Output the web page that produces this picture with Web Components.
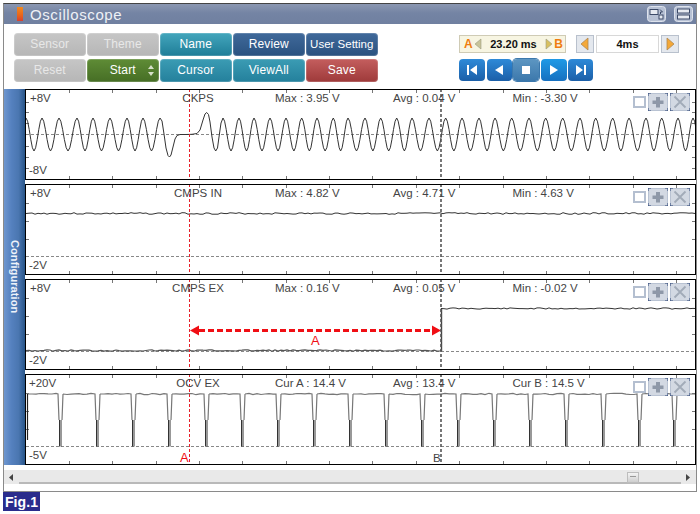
<!DOCTYPE html>
<html><head><meta charset="utf-8"><title>Oscilloscope</title>
<style>
html,body{margin:0;padding:0;background:#fff;font-family:"Liberation Sans",Arial,sans-serif}
body{padding:3px 0 0 3px;width:697px;height:511px;box-sizing:border-box;overflow:hidden}
</style></head><body>
<osc-window>
  <osc-title slot="title">Oscilloscope</osc-title>
  <osc-toolbar slot="toolbar"></osc-toolbar>
  <osc-sidebar slot="side">Configuration</osc-sidebar>
  <osc-panel slot="panels" kind="ckps" ytop="89" top-label="+8V" bottom-label="-8V" name="CKPS" s1="Max : 3.95 V" s2="Avg : 0.04 V" s3="Min : -3.30 V"></osc-panel>
  <osc-panel slot="panels" kind="in" ytop="184" top-label="+8V" bottom-label="-2V" name="CMPS IN" s1="Max : 4.82 V" s2="Avg : 4.71 V" s3="Min : 4.63 V"></osc-panel>
  <osc-panel slot="panels" kind="ex" ytop="279" top-label="+8V" bottom-label="-2V" name="CMPS EX" s1="Max : 0.16 V" s2="Avg : 0.05 V" s3="Min : -0.02 V"></osc-panel>
  <osc-panel slot="panels" kind="ocv" ytop="374" top-label="+20V" bottom-label="-5V" name="OCV EX" s1="Cur A : 14.4 V" s2="Avg : 13.4 V" s3="Cur B : 14.5 V"></osc-panel>
  <osc-scroll slot="scroll"></osc-scroll>
</osc-window>
<fig-badge>Fig.1</fig-badge>
<script>
function def(name, css, html, init){
  customElements.define(name, class extends HTMLElement{
    connectedCallback(){
      if(this.shadowRoot) return;
      const r=this.attachShadow({mode:'open'});
      r.innerHTML='<style>'+css+'</style>'+(typeof html==='function'?html(this):html);
      if(init) init(this,r);
    }
  });
}
def('osc-window',
 ':host{display:block;width:694px;height:489px;box-sizing:border-box;border:1px solid #8a8a8a;border-top-color:#444;background:#fff}'+
 '.main{display:flex;height:376px}.panels{display:flex;flex-direction:column;gap:4px;width:671px}',
 '<slot name="title"></slot><slot name="toolbar"></slot><div class="main"><slot name="side"></slot><div class="panels"><slot name="panels"></slot></div></div><slot name="scroll"></slot>');

def('osc-title',
 ':host{display:flex;align-items:center;height:20px;box-sizing:border-box;background:linear-gradient(#8b97b1,#7484a4 45%,#7080a0);color:#eef1f6;font-size:15px;padding-left:13px}'+
 '.ic{width:6px;height:14px;background:linear-gradient(#f08a20,#e8641c 60%,#d84030);margin-right:7px}'+
 '.t{flex:1;letter-spacing:.6px}.b{display:flex;gap:8px;margin-right:3px}'+
 '.b svg{display:block;width:19px;height:16px}',
 '<div class="ic"></div><div class="t"><slot></slot></div><div class="b">'+
 '<svg viewBox="0 0 19 16"><rect x=".5" y=".5" width="18" height="15" rx="3" fill="#b7c1d4" stroke="#dde2ec"/><rect x="3" y="3.5" width="8" height="5" fill="#e6eaf1" stroke="#3c4a68"/><rect x="12" y="9" width="4" height="4" fill="#e6eaf1" stroke="#3c4a68"/><path d="M13 3.5l2.5 2.5h-2v2" fill="none" stroke="#3c4a68"/></svg>'+
 '<svg viewBox="0 0 19 16"><rect x=".5" y=".5" width="18" height="15" rx="3" fill="#b7c1d4" stroke="#dde2ec"/><rect x="3.5" y="3" width="12" height="4" fill="#e6eaf1" stroke="#3c4a68"/><rect x="3.5" y="9" width="12" height="4" fill="#e6eaf1" stroke="#3c4a68"/></svg>'+
 '</div>');

def('osc-btn',
 ':host{display:flex;align-items:center;justify-content:center;position:relative;box-sizing:border-box;height:22.5px;width:71.5px;border-radius:4px;font-size:12px;letter-spacing:.15px;color:#fff;white-space:nowrap;'+
 'background:linear-gradient(var(--a),var(--b));box-shadow:inset 0 0 0 1px rgba(255,255,255,.18)}'+
 ':host([tight]){font-size:11.5px;letter-spacing:0}'+
 '.s{position:absolute;right:4px;top:6px;display:block}',
 h=>'<slot></slot>'+(h.hasAttribute('spin')?'<svg class="s" width="8" height="11" viewBox="0 0 8 11"><path d="M4 0l3 4H1zM4 11L1 7h6z" fill="#d6e0c8"/></svg>':''));

const tri=(d,f)=>'<svg width="10" height="14" viewBox="0 0 10 14" style="display:block"><path d="'+d+'" fill="'+f+'" stroke="#9a9a80" stroke-width=".6"/></svg>';
const arrow=(d)=>'<svg width="12" height="16" viewBox="0 0 12 16" style="display:block"><path d="'+d+'" fill="#f4a838" stroke="#b08850" stroke-width=".8"/></svg>';
const nav=(d)=>'<svg width="14" height="12" viewBox="0 0 14 12" style="display:block"><path d="'+d+'" fill="#fff"/></svg>';

def('osc-nav',
 ':host{display:flex;align-items:center;justify-content:center;height:22px;box-sizing:border-box;border-radius:4px;background:linear-gradient(#2e8ad8,#1b5fa8)}'+
 ':host([stop]){background:linear-gradient(#5d96c2,#3c78ac);box-shadow:0 0 0 1px #3c78ac}:host([bright]){background:linear-gradient(#1f9ae6,#1670c0)}',
 '<slot></slot>');

def('osc-toolbar',
 ':host{display:flex;height:65px;box-sizing:border-box;padding:9px 0 0 10px}'+
 '.g{display:grid;grid-template-columns:repeat(5,71.5px);grid-auto-rows:22.5px;gap:3.5px 1.5px;width:365px;height:49px}'+
 '.r{margin-left:80px;display:flex;flex-direction:column;padding-top:2px}'+
 '.top{display:flex;height:18px}'+
 '.ab{width:107px;box-sizing:border-box;border:1px solid #cfcbb5;background:#f7f5e2;display:flex;align-items:center;padding:0 2px 0 4px;font:bold 11px "Liberation Sans",Arial,sans-serif;color:#111}'+
 '.ab b{color:#ef7d10;font-size:12px}.ab span{flex:1;text-align:center}'+
 '.ar{width:18px;height:18px;box-sizing:border-box;border:1px solid #b9c1cd;background:#e4e8ee;display:flex;align-items:center;justify-content:center}'+
 '.f{width:63px;height:18px;box-sizing:border-box;border:1px solid #d8d8d8;margin:0 2px 0 2px;text-align:center;font:bold 11px/16px "Liberation Sans",Arial,sans-serif;color:#111}'+
 '.sep{width:10px}'+
 '.n{display:grid;grid-template-columns:26px 25px 26px 26px 25px;gap:1.5px;margin-top:6px;width:134px}',
 '<div class="g">'+
 [['Sensor','#c6c6c6','#b6b6b6','#e8e8e8'],['Theme','#c6c6c6','#b6b6b6','#e8e8e8'],['Name','#43a6bc','#1f7d98'],['Review','#40699a','#2a5280'],['User Setting','#40699a','#2a5280',null,0,1],
  ['Reset','#c6c6c6','#b6b6b6','#e8e8e8'],['Start','#5f8c36','#466e25',null,1],['Cursor','#3b9cb4','#24809c'],['ViewAll','#3b9cb4','#24809c'],['Save','#c45e5e','#9e3a3a']]
 .map(b=>'<osc-btn '+(b[4]?'spin ':'')+(b[5]?'tight ':'')+'style="--a:'+b[1]+';--b:'+b[2]+(b[3]?';color:'+b[3]:'')+'">'+b[0]+'</osc-btn>').join('')+
 '</div><div class="r"><div class="top"><div class="ab"><b>A</b>'+tri('M8 2v10L2 7z','#c8c49a')+'<span>23.20 ms</span>'+tri('M2 2v10l6-5z','#d8c060')+'<b>B</b></div><div class="sep"></div>'+
 '<div class="ar">'+arrow('M9 2v12L2 8z')+'</div><div class="f">4ms</div><div class="ar">'+arrow('M3 2v12l7-6z')+'</div></div>'+
 '<div class="n"><osc-nav>'+nav('M2 1h2v10H2zM12 1v10L5 6z')+'</osc-nav><osc-nav>'+nav('M11 1v10L3 6z')+'</osc-nav><osc-nav stop>'+nav('M3 2h8v8H3z')+'</osc-nav><osc-nav bright>'+nav('M3 1v10l8-5z')+'</osc-nav><osc-nav>'+nav('M2 1v10l7-5zM10 1h2v10h-2z')+'</osc-nav></div></div>');

def('osc-sidebar',
 ':host{display:flex;align-items:center;justify-content:center;width:21px;height:376px;box-sizing:border-box;background:linear-gradient(90deg,#6f97cf,#5581bf 35%,#4a76b0 70%,#275488);color:#eef3fa;font:bold 11px "Liberation Sans",Arial,sans-serif}'+
 'div{writing-mode:vertical-rl;margin-top:-1px;letter-spacing:.1px}',
 '<div><slot></slot></div>');

/* waveforms */
function rng(seed){let s=seed;return()=>{s=(s*9301+49297)%233280;return s/233280}}
function ckpsPath(){
  const p1=[9.5,26,42,59,77,93,110,127,143,160];
  const p2=[223,239,254,270,286,301.7,317,333.3,348,365,380.7,396.7,412,429,445.7,462,479,495,511.7,529,545.7,562.7,580,595.7,612.7,629,646,661.7,678,693,709];
  const mid=134.5,a=16.5;let pts=[];
  const seg=(ps)=>{for(let i=0;i<ps.length-1;i++){for(let k=0;k<10;k++){const t=k/10;pts.push([ps[i]+t*(ps[i+1]-ps[i]),mid-a*Math.cos(Math.PI*2*t)]);}}};
  seg(p1);
  const q=[[160,118],[162,121],[164,134],[166,148],[168,155.5],[169.5,157],[171,155],[173,147],[175,139],[177,135.5],[180,134.5],[186,134.5],[192,134.3],[197,133.5],[200,130],[203,120],[205,114],[206.7,112.5],[208.5,114.5],[210,122],[212,137],[214,148],[215.7,151],[217.5,148],[219,137],[221,123]];
  pts=pts.concat(q);seg(p2);
  return 'M'+pts.filter(p=>p[0]>=26).map(p=>p[0].toFixed(1)+' '+p[1].toFixed(1)).join('L');
}
function noisy(x0,x1,y,seed,amp){const r=rng(seed);let d='M'+x0+' '+y;for(let x=x0+3;x<x1;x+=3){d+='L'+x+' '+(y+(r()-.5)*amp).toFixed(1)}return d+'L'+x1+' '+y;}
function ocvPaths(){
  const e=[60,97,133,169,206,242,278,314,350,386,422,458,494,530,566,603,639,674];
  const r=rng(7);let top='',low='';let prev=28;
  e.forEach(x=>{
    let d='M'+prev+' 394';
    for(let a=prev+4;a<x-2;a+=4)d+='L'+a+' '+(394+(r()-.5)*1.4).toFixed(1);
    top+=d+'L'+(x-2)+' 394L'+(x-1)+' 420M'+(x+2)+' 420L'+(x+3)+' 394 ';
    low+='M'+(x-.5)+' 420V446.5M'+(x+1)+' 420V446.5';
    prev=x+3;
  });
  top+='M'+prev+' 394L695 394';
  return [top,low];
}
function ticks(y0,ys){
  let d='';
  for(let x=69;x<695;x+=43.35){const X=Math.round(x)+.5;d+='M'+X+' '+(y0+1)+'v3M'+X+' '+(y0+87)+'v3';}
  ys.forEach(o=>{d+='M26 '+(y0+o+.5)+'h3M692 '+(y0+o+.5)+'h3';});
  return d;
}
function svgFor(kind,y){
  let s='',dash=y+72,ys=[19,37,55];
  if(kind==='ckps'){dash=134;ys=[13,23,34,57,68,79];}
  const base='<path d="'+ticks(y,ys)+'" stroke="#777" fill="none"/>'+
    '<path d="M26 '+(dash+.5)+'H695" stroke="#888" stroke-dasharray="3 2" fill="none"/>';
  if(kind==='ckps') s='<path d="'+ckpsPath()+'" fill="none" stroke="#333" stroke-width="1"/>';
  if(kind==='in') s='<path d="'+noisy(26,695,213.5,3,1.6)+'" fill="none" stroke="#333" stroke-width="1"/>';
  if(kind==='ex') s='<path d="'+noisy(26,441,350.5,5,1.5)+'" fill="none" stroke="#555" stroke-width="1.2"/>'+
     '<path d="M441.5 351V308" stroke="#444" stroke-width="1.4" fill="none"/><path d="'+noisy(441,695,308.5,11,1.4)+'" fill="none" stroke="#333" stroke-width="1"/>'+
     '<path d="M199 330.5H433" stroke="#f00e14" stroke-width="3" stroke-dasharray="6 3" fill="none"/><path d="M190 330.5l9-5v10zM441 330.5l-9-5v10z" fill="#f00e14"/>';
  if(kind==='ocv'){const p=ocvPaths();s='<path d="M27.5 394V440" stroke="#222" stroke-width="1.2" fill="none"/><path d="'+p[0]+'" fill="none" stroke="#777" stroke-width="1.2"/><path d="'+p[1]+'" fill="none" stroke="#333" stroke-width="1"/>';}
  const cur='<path d="M189.5 '+y+'V'+(y+91)+'" stroke="#e8202a" stroke-dasharray="3 2" fill="none"/><path d="M441 '+y+'V'+(y+91)+'" stroke="#555" stroke-width="1.6" stroke-dasharray="3 2" fill="none"/>';
  return '<svg class="c" width="669" height="89" viewBox="26 '+(y+1)+' 669 89">'+base+s+cur+'</svg>';
}
const T=(cls,left,text,extra)=>'<span class="l '+cls+'" style="left:'+left+'px;'+(extra||'')+'">'+text+'</span>';
def('osc-panel',
 ':host{display:block;position:relative;height:91px;box-sizing:border-box;border:1px solid #000;background:#fff;overflow:hidden}'+
 '.c{display:block}.l{position:absolute;font-size:11.5px;line-height:14px;color:#444;white-space:nowrap;top:1px}'+
 '.bot{top:73px}.nm{transform:translateX(-50%)}'+
 '.red{color:#f00e14;font-size:13px}.ctl{position:absolute;left:607px;top:3px;display:flex;align-items:flex-start;gap:2px}'+
 '.ck{width:13px;height:12px;box-sizing:border-box;border:2px solid #b4bfd0;background:#fff;margin-top:3px}'+
 '.bt{display:block}',
 h=>{
  const y=+h.getAttribute('ytop'),k=h.getAttribute('kind');
  let extra='';
  if(k==='ex') extra+=T('red',285,'A','top:54px');
  if(k==='ocv') extra+=T('red',154,'A','top:76px')+T('',407,'B','top:76px');
  const box=(icon)=>'<svg class="bt" width="20" height="18" viewBox="0 0 20 18"><rect x=".5" y=".5" width="19" height="17" fill="#d3d9e3" stroke="#b8c2d2"/><path d="M0 3V0h3M17 0h3v3M0 15v3h3M17 18h3v-3" stroke="#2c4476" fill="none"/>'+icon+'</svg>';
  return svgFor(k,y)+
   T('',k==='ocv'?3:4,h.getAttribute('top-label'))+
   T('bot',3,h.getAttribute('bottom-label'))+
   T('nm',172,h.getAttribute('name'))+
   T('',249,h.getAttribute('s1'))+T('',367,h.getAttribute('s2'))+T('',486.5,h.getAttribute('s3'))+extra+
   '<div class="ctl"><div class="ck"></div>'+box('<path d="M8 4h4v3.5h3.5v3.5H12v3.5H8V11H4.500V7.500H8z" fill="#8e98a8"/>')+box('<path d="M4.500 3.500l11 11M15.500 3.500l-11 11" stroke="#a2abb8" stroke-width="1.800"/>')+'</div>';
 });

def('osc-scroll',
 ':host{display:block;height:26px;box-sizing:border-box;padding-top:5px}'+
 '.t{display:flex;align-items:center;height:14px;background:#e9e9e9;position:relative}'+
 '.bar{flex:1;height:14px;box-sizing:border-box;border-bottom:2px solid #b9b9b9;margin:0 15px 0 15px;position:relative}'+
 '.th{position:absolute;left:608px;top:2px;width:12px;height:11px;box-sizing:border-box;border:1px solid #bdbdbd;background:linear-gradient(#f4f4f4,#cfcfcf)}'+
 '.th:after{content:"";position:absolute;left:2px;right:2px;top:3px;border-top:1px solid #999}'+
 'svg{display:block;position:absolute;top:4px}',
 '<div class="t"><svg style="left:5px" width="5" height="7"><path d="M4 0v7L0 3.500z" fill="#444"/></svg><div class="bar"><div class="th"></div></div><svg style="right:6px" width="5" height="7"><path d="M1 0v7l4-3.500z" fill="#444"/></svg></div>');

def('fig-badge',
 ':host{display:flex;align-items:center;justify-content:center;width:37px;height:19px;background:#2a2c8c;color:#fff;font:bold 14px "Liberation Sans",Arial,sans-serif;letter-spacing:.1px}',
 '<slot></slot>');
</script>
</body></html>
